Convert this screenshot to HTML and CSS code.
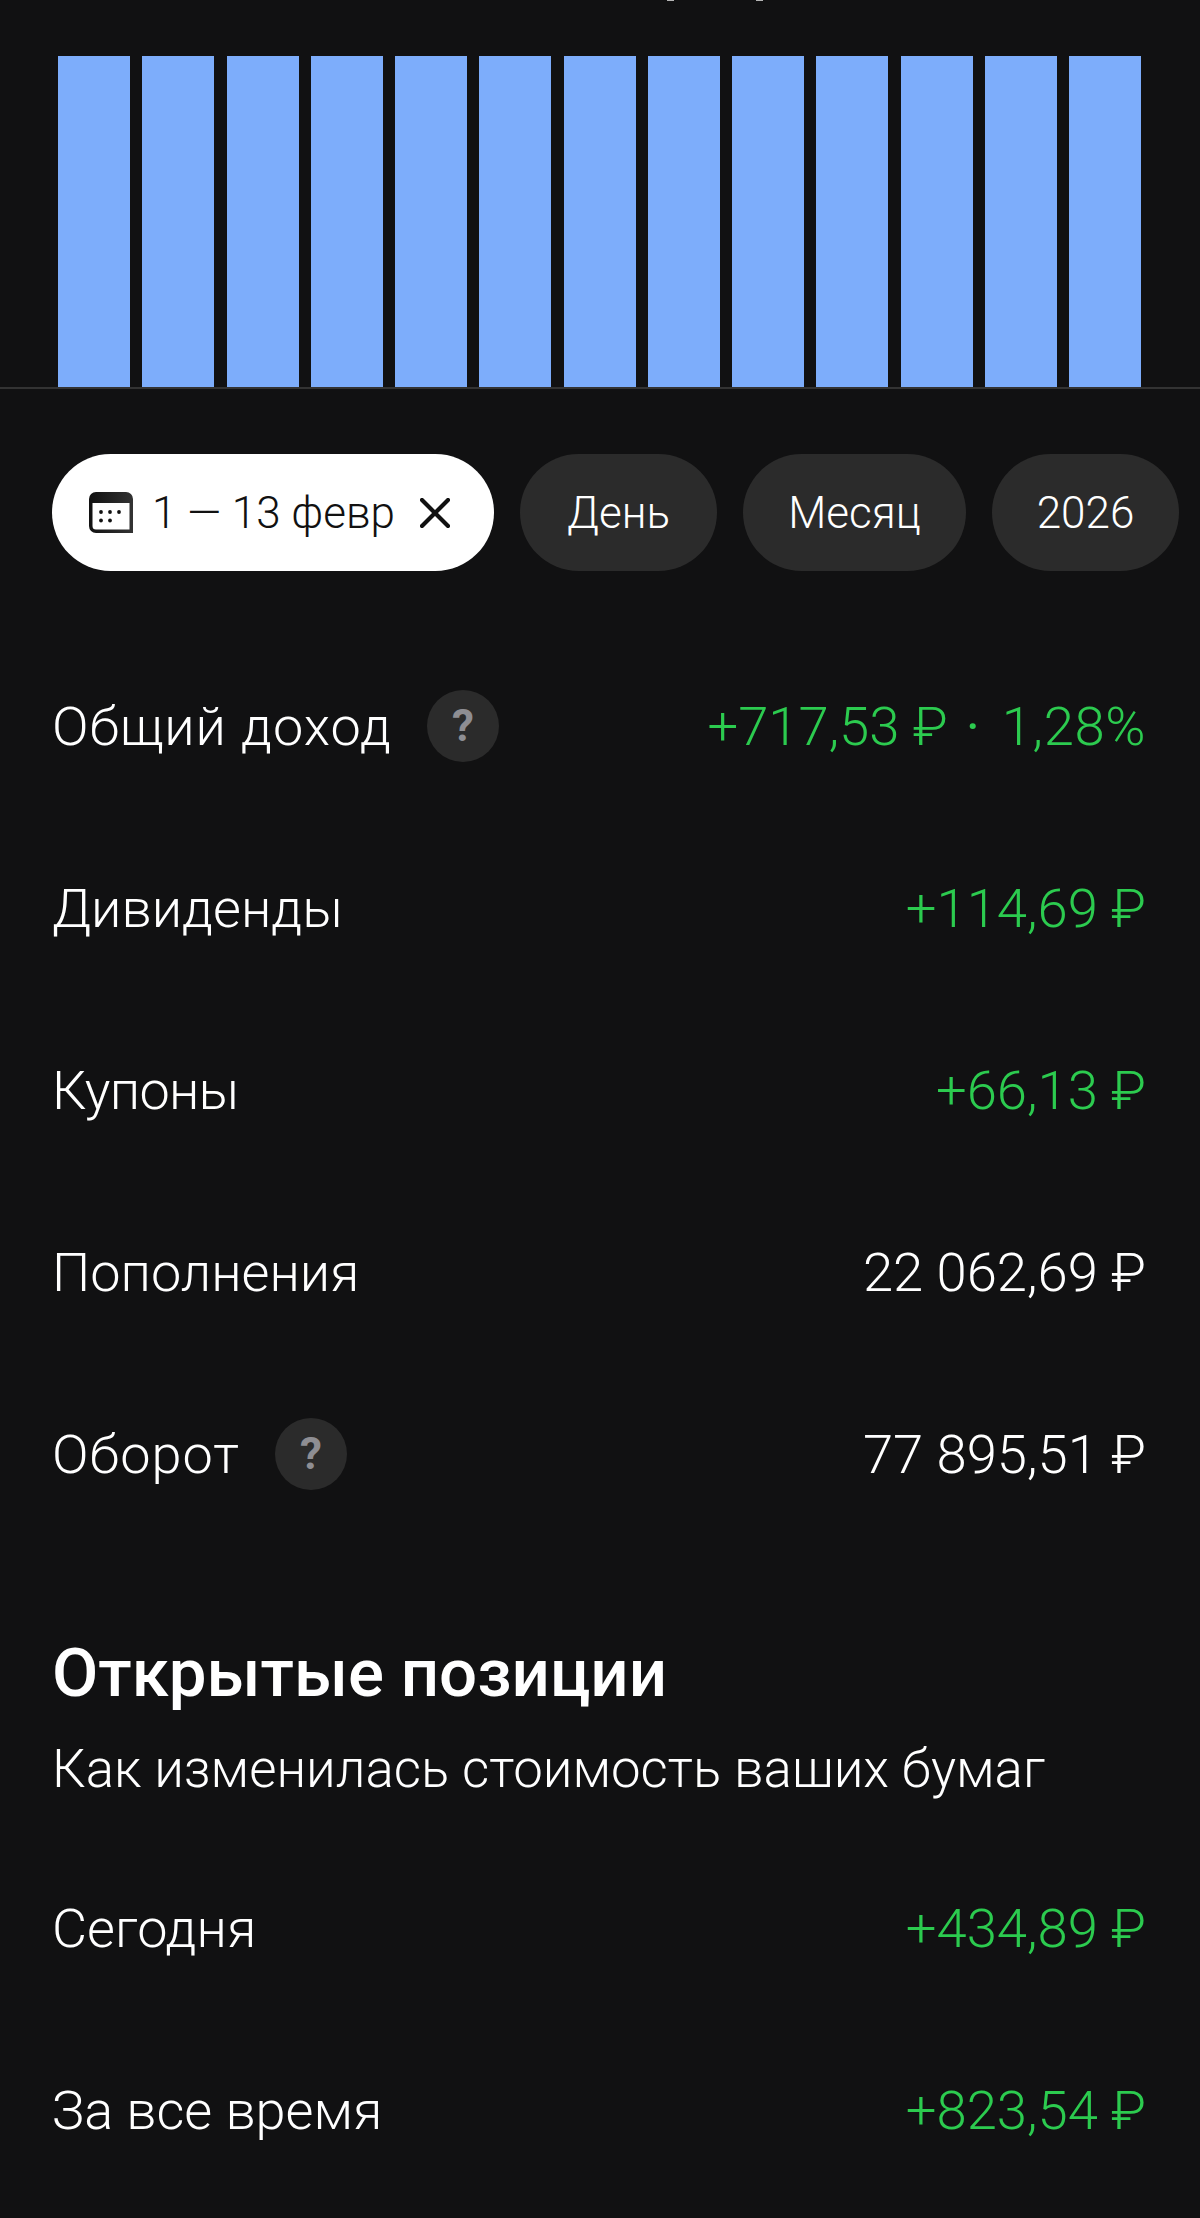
FILE: index.html
```html
<!DOCTYPE html>
<html lang="ru">
<head>
<meta charset="utf-8">
<title>Доход</title>
<link rel="stylesheet" href="styles.css">
</head>
<body>
<div class="page">
  <div class="clipped"><span class="tip"></span><span class="tip"></span></div>
  <div class="chart">
    <div class="bar"></div><div class="bar"></div><div class="bar"></div><div class="bar"></div><div class="bar"></div><div class="bar"></div><div class="bar"></div><div class="bar"></div><div class="bar"></div><div class="bar"></div><div class="bar"></div><div class="bar"></div><div class="bar"></div>
  </div>
  <div class="filters">
    <div class="pill pill-active">
      <svg class="cal" viewBox="0 0 44 41">
        <defs><linearGradient id="calTop" x1="0" y1="0" x2="1" y2="0"><stop offset="0" stop-color="#111"/><stop offset="1" stop-color="#333"/></linearGradient></defs>
        <path fill="url(#calTop)" fill-rule="evenodd" d="M7 0H37a7 7 0 0 1 7 7V41H7a7 7 0 0 1-7-7V7a7 7 0 0 1 7-7ZM3.500 11V34a3.500 3.500 0 0 0 3.500 3.500H40.500V11Z"/>
        <circle cx="12" cy="20" r="1.900" fill="#111"/><circle cx="21" cy="20" r="1.900" fill="#111"/><circle cx="30" cy="20" r="1.900" fill="#111"/><circle cx="12" cy="28.500" r="1.900" fill="#111"/><circle cx="21" cy="28.500" r="1.900" fill="#111"/>
      </svg>
      <span class="pill-date">1 — 13 февр</span>
      <svg class="close" viewBox="0 0 30 30"><path d="M2 2L28 28M28 2L2 28" stroke="#111" stroke-width="4.200" stroke-linecap="round"/></svg>
    </div>
    <div class="pill pill-day">День</div>
    <div class="pill pill-month">Месяц</div>
    <div class="pill pill-year">2026</div>
  </div>
  <div class="rows">
    <div class="row"><div class="label label-wide">Общий доход<span class="help">?</span></div><div class="value green">+717,53 ₽<span class="dot">·</span><span class="percent">1,28%</span></div></div>
    <div class="row"><div class="label">Дивиденды</div><div class="value green">+114,69 ₽</div></div>
    <div class="row"><div class="label label-tight">Купоны</div><div class="value green">+66,13 ₽</div></div>
    <div class="row"><div class="label">Пополнения</div><div class="value">22 062,69 ₽</div></div>
    <div class="row"><div class="label label-wide">Оборот<span class="help">?</span></div><div class="value">77 895,51 ₽</div></div>
  </div>
  <div class="section">
    <h2 class="section-title">Открытые позиции</h2>
    <p class="section-sub">Как изменилась стоимость ваших бумаг</p>
  </div>
  <div class="rows">
    <div class="row"><div class="label">Сегодня</div><div class="value green">+434,89 ₽</div></div>
    <div class="row"><div class="label">За все время</div><div class="value green">+823,54 ₽</div></div>
  </div>
</div>
</body>
</html>
```
FILE: styles.css
```css
* { box-sizing: border-box; }
html, body { margin: 0; padding: 0; background: #111112; }
.page {
  width: 1200px;
  height: 2218px;
  overflow: hidden;
  color: #fff;
  font-family: Roboto, "Noto Sans", sans-serif;
  font-weight: 350;
}
.clipped {
  height: 2px;
  padding-left: 667px;
  display: flex;
  gap: 82px;
  align-items: flex-start;
}
.tip { width: 7px; height: 1px; background: #b5b5b5; }
.chart {
  height: 333px;
  margin-top: 54px;
  padding: 0 59px 0 58px;
  display: flex;
  justify-content: space-between;
  border-bottom: 2px solid #333;
}
.bar { width: 72px; background: #7dadfb; }
.filters {
  display: flex;
  gap: 26px;
  margin-top: 65px;
  padding-left: 52px;
}
.pill {
  height: 117px;
  border-radius: 59px;
  background: #2b2b2b;
  display: flex;
  align-items: center;
  justify-content: center;
  flex: none;
  font-size: 44px;
}
.pill-active { width: 442px; background: #fff; color: #111; justify-content: flex-start; padding-left: 37px; }
.pill-day { width: 197px; }
.pill-month { width: 223px; }
.pill-year { width: 187px; }
.cal { width: 44px; height: 41px; flex: none; }
.pill-date { margin-left: 19px; }
.close { width: 30px; height: 30px; margin-left: 25px; flex: none; }
.rows { display: flex; flex-direction: column; }
.filters + .rows { margin-top: 64px; }
.row {
  height: 182px;
  padding: 0 54px 0 52px;
  display: flex;
  align-items: center;
  justify-content: space-between;
  font-size: 54px;
}
.label { display: flex; align-items: center; }
.label-wide { letter-spacing: 1px; }
.label-tight { letter-spacing: -0.7px; }
.help {
  width: 72px;
  height: 72px;
  margin-left: 35px;
  border-radius: 50%;
  background: #2b2b2b;
  color: #8e8e93;
  font-size: 44px;
  font-weight: 700;
  letter-spacing: 0;
  display: flex;
  align-items: center;
  justify-content: center;
}
.value { font-size: 54.4px; }
.green { color: #2ccb4f; }
.dot { margin: 0 22px 0 18px; font-weight: 400; }
.percent { letter-spacing: 0.6px; }
.section { padding: 0 52px; margin-top: 88px; }
.section-title { margin: 0; font-size: 67.2px; line-height: 80px; font-weight: 500; }
.section-sub { margin: 26px 0 0; font-size: 52.75px; line-height: 60px; }
.section + .rows { margin-top: 38px; }
```
